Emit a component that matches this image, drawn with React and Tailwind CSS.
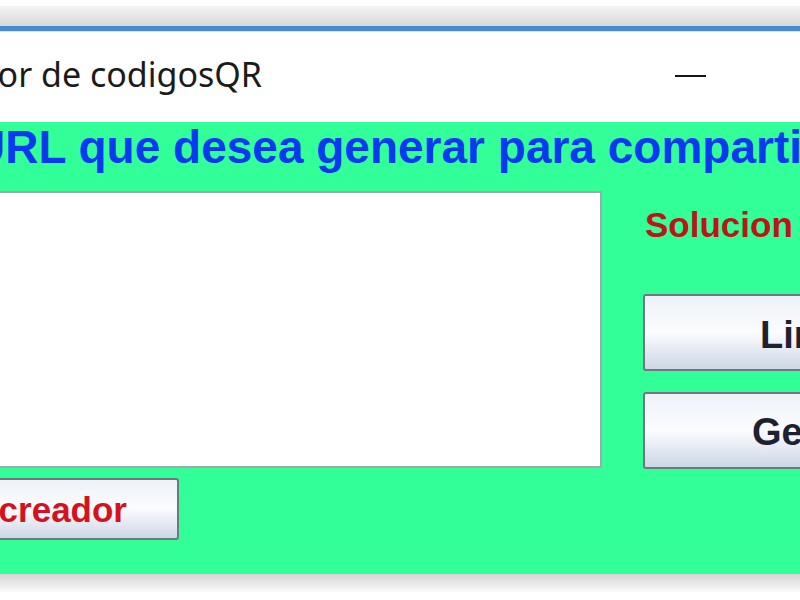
import React from "react";

export default function App() {
  return (
    <div className="w-[800px] h-[600px] overflow-hidden bg-white flex flex-col">
      {/* shadow above the window */}
      <div className="h-[6px] shrink-0 bg-white" />
      <div className="h-[20px] shrink-0 bg-linear-to-b from-[#f4f4f4] to-[#d8d8d8]" />
      <div className="h-[5px] shrink-0 bg-[#4a88d3]" />
      <div className="h-[1px] shrink-0 bg-[#cfe2f6]" />

      {/* title bar */}
      <div className="h-[90px] shrink-0 bg-white flex items-start">
        <div className="w-[262px] shrink-0 overflow-hidden flex justify-end pt-[19px]">
          <span className="whitespace-nowrap text-[34px] leading-[1.4] text-[#1b1b1b] [font-family:'Noto_Sans',sans-serif]">
            Generador de codigosQR
          </span>
        </div>
        <div className="ml-[413px] mt-[43px] w-[31px] h-[2px] bg-[#151515]" />
      </div>

      {/* content panel */}
      <div className="h-[452px] shrink-0 bg-[#33ff99] flex flex-col overflow-hidden">
        <div className="h-[69px] shrink-0 pt-[2px] ml-[-28px] whitespace-nowrap">
          <span className="text-[46px] leading-none font-bold text-[#0a3af0] [font-family:'Liberation_Sans',Arial,sans-serif]">
            URL que desea generar para compartir
          </span>
        </div>

        <div className="flex items-start">
          {/* left column */}
          <div className="ml-[-30px] flex flex-col gap-[10px] shrink-0">
            <div className="w-[632px] h-[277px] bg-white border-2 border-[#a2a7ad]" />
            <div className="w-[209px] h-[62px] rounded-[3px] border-2 border-[#6f7880] bg-linear-to-b from-[#eef2f8] via-[#fbfcfe] to-[#cdd7e5] overflow-hidden flex justify-end items-start pt-[12px] pr-[50px]">
              <span className="whitespace-nowrap text-[35px] leading-none font-bold text-[#d4121d] [font-family:'Liberation_Sans',Arial,sans-serif]">
                creador
              </span>
            </div>
          </div>

          {/* right column */}
          <div className="ml-[43px] flex flex-col shrink-0">
            <div className="mt-[16px] whitespace-nowrap text-[35px] leading-none font-bold text-[#bb1616] [font-family:'Liberation_Sans',Arial,sans-serif]">
              Solucion
            </div>
            <div className="ml-[-2px] mt-[52px] w-[260px] h-[77px] rounded-[3px] border-2 border-[#6f7880] bg-linear-to-b from-[#eef2f8] via-[#fbfcfe] to-[#cdd7e5] pl-[115px] pt-[20px]">
              <span className="whitespace-nowrap text-[38px] leading-none font-bold text-[#1e2230] [font-family:'Liberation_Sans',Arial,sans-serif]">
                Limpiar
              </span>
            </div>
            <div className="ml-[-2px] mt-[21px] w-[260px] h-[77px] rounded-[3px] border-2 border-[#6f7880] bg-linear-to-b from-[#eef2f8] via-[#fbfcfe] to-[#cdd7e5] pl-[107px] pt-[19px]">
              <span className="whitespace-nowrap text-[38px] leading-none font-bold text-[#1e2230] [font-family:'Liberation_Sans',Arial,sans-serif]">
                Generar
              </span>
            </div>
          </div>
        </div>
      </div>

      {/* shadow below the window */}
      <div className="h-[18px] shrink-0 bg-linear-to-b from-[#d4d4d4] to-[#fbfbfb]" />
      <div className="flex-1 bg-white" />
    </div>
  );
}
